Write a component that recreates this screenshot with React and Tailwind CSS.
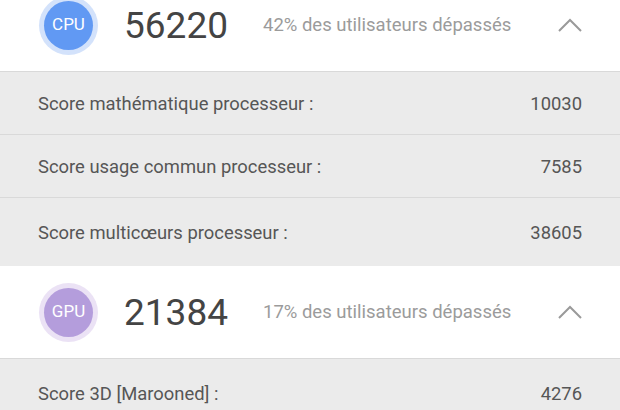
const sections = [
  {
    label: 'CPU',
    score: '56220',
    percent: '42% des utilisateurs dépassés',
    ring: 'bg-[#d3e2fb]',
    fill: 'bg-[#6199f3]',
    rows: [
      ['Score mathématique processeur :', '10030'],
      ['Score usage commun processeur :', '7585'],
      ['Score multicœurs processeur :', '38605'],
    ],
  },
  {
    label: 'GPU',
    score: '21384',
    percent: '17% des utilisateurs dépassés',
    ring: 'bg-[#ebe2f5]',
    fill: 'bg-[#b49ddc]',
    rows: [['Score 3D [Marooned] :', '4276']],
  },
];

function Chevron() {
  return (
    <svg width="26" height="16" viewBox="0 0 26 16" className="text-[#9a9a9a]">
      <polyline points="2,14 13,3 24,14" fill="none" stroke="currentColor" strokeWidth="2" />
    </svg>
  );
}

function Section({ s }) {
  return (
    <div>
      <div className="h-[93px] bg-white border-b border-[#d9d9d9] flex items-center pl-[39px] pr-[38px]">
        <div className={`w-[59px] h-[59px] rounded-full flex items-center justify-center ${s.ring}`}>
          <div className={`w-[49px] h-[49px] rounded-full flex items-center justify-center text-white text-[17px] ${s.fill}`}>
            {s.label}
          </div>
        </div>
        <div className="ml-[26px] w-[139px] text-[37px] leading-none text-[#444]">{s.score}</div>
        <div className="pt-[2px] text-[18.5px] text-[#9b9b9b]">{s.percent}</div>
        <div className="ml-auto -mr-[1px]">
          <Chevron />
        </div>
      </div>
      {s.rows.map(([label, value], i) => (
        <div
          key={label}
          className={`bg-[#ebebeb] flex items-center justify-between pl-[38px] pr-[38px] pt-[2px] text-[18.4px] text-[#565656] ${
            i === s.rows.length - 1 ? 'h-[68px]' : 'h-[63px] border-b border-[#d9d9d9]'
          }`}
        >
          <span>{label}</span>
          <span>{value}</span>
        </div>
      ))}
    </div>
  );
}

export default function App() {
  return (
    <div className="w-[620px] h-[410px] overflow-hidden bg-[#ebebeb] font-['Roboto',sans-serif]">
      <div className="-mt-[21px]">
        {sections.map((s) => (
          <Section key={s.label} s={s} />
        ))}
      </div>
    </div>
  );
}
